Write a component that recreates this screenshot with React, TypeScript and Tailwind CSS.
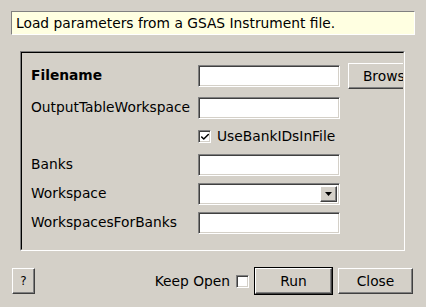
import { Check } from 'lucide-react';

const font = { fontFamily: '"DejaVu Sans", Verdana, sans-serif' };

const sunken =
  'border-t border-l border-[#808080] border-r border-b border-r-white border-b-white shadow-[inset_1px_1px_0_#404040,inset_-1px_-1px_0_#d4d0c8]';
const raised =
  'border-t border-l border-white border-r border-b border-r-[#404040] border-b-[#404040] shadow-[inset_-1px_-1px_0_#808080]';

const TextBox = () => <div className={`h-[22px] w-[142px] bg-white ${sunken}`} />;

const CheckBox = ({ checked }: { checked: boolean }) => (
  <div className={`flex h-[13px] w-[13px] items-center justify-center bg-white ${sunken}`}>
    {checked && <Check size={10} strokeWidth={3.5} className="text-black" />}
  </div>
);

const Label = ({ children, bold }: { children: string; bold?: boolean }) => (
  <div className={`whitespace-nowrap text-[13.8px] leading-none text-black ${bold ? 'font-bold' : ''}`}>{children}</div>
);

export default function App() {
  return (
    <div style={font} className="flex h-[307px] w-[426px] flex-col bg-[#d4d0c8] text-black">
      <div className="mx-[11px] mt-[11px] flex h-[24px] items-center border-t border-l border-[#808080] border-r border-b border-r-white border-b-white bg-[#ffffe1] pl-[4px] text-[13.8px]">
        Load parameters from a GSAS Instrument file.
      </div>

      <div className="ml-[20px] mt-[16px] h-[200px] w-[385px] border-t border-l border-[#808080] border-r border-b border-r-white border-b-white">
        <div className="h-full w-full overflow-hidden border-t border-l border-[#000] border-r border-b border-r-[#d4d0c8] border-b-[#d4d0c8] pl-[9px] pt-[10px]">
          <div className="grid grid-cols-[159px_142px_80px] items-center gap-x-[8px]">
            <div className="flex h-[26px] items-center"><Label bold>Filename</Label></div>
            <TextBox />
            <div className={`flex h-[26px] w-[80px] items-center justify-center bg-[#d4d0c8] text-[13.8px] ${raised}`}>Browse</div>

            <div className="mt-[8px] flex h-[22px] items-center"><Label>OutputTableWorkspace</Label></div>
            <div className="mt-[8px]"><TextBox /></div>
            <div />

            <div className="mt-[7px] h-[21px]" />
            <div className="mt-[7px] flex h-[21px] items-center gap-[6px]">
              <CheckBox checked />
              <span className="whitespace-nowrap text-[13.8px]">UseBankIDsInFile</span>
            </div>
            <div />

            <div className="mt-[7px] flex h-[22px] items-center"><Label>Banks</Label></div>
            <div className="mt-[7px]"><TextBox /></div>
            <div />

            <div className="mt-[7px] flex h-[22px] items-center"><Label>Workspace</Label></div>
            <div className={`mt-[7px] flex h-[22px] w-[142px] items-stretch justify-end bg-white p-[2px] ${sunken}`}>
              <div className={`flex w-[17px] items-center justify-center bg-[#d4d0c8] ${raised}`}>
                <svg width="7" height="4" viewBox="0 0 7 4"><path d="M0 0H7L3.5 4Z" fill="#000" /></svg>
              </div>
            </div>
            <div />

            <div className="mt-[7px] flex h-[22px] items-center"><Label>WorkspacesForBanks</Label></div>
            <div className="mt-[7px]"><TextBox /></div>
            <div />
          </div>
        </div>
      </div>

      <div className="mt-[16px] flex items-center pl-[12px] pr-[13px]">
        <div className={`flex h-[26px] w-[23px] items-center justify-center bg-[#d4d0c8] text-[12px] ${raised}`}>?</div>
        <div className="ml-auto flex items-center gap-[6px]">
          <span className="text-[13.8px]">Keep Open</span>
          <CheckBox checked={false} />
        </div>
        <div className="ml-[5px] border border-black">
          <div className={`flex h-[26px] w-[77px] items-center justify-center bg-[#d4d0c8] text-[13.8px] ${raised}`}>Run</div>
        </div>
        <div className={`ml-[5px] flex h-[26px] w-[75px] items-center justify-center bg-[#d4d0c8] text-[13.8px] ${raised}`}>Close</div>
      </div>
    </div>
  );
}
